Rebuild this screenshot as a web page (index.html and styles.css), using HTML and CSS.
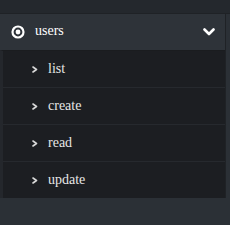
FILE: index.html
```html
<!DOCTYPE html>
<html>
<head>
<meta charset="utf-8">
<link rel="stylesheet" href="styles.css">
</head>
<body>
<div class="page">
  <div class="topbar"></div>
  <div class="menu">
    <div class="header">
      <svg class="radio" width="14" height="14" viewBox="0 0 14 14"><circle cx="7" cy="7" r="5.5" fill="none" stroke="#fff" stroke-width="2.2"/><circle cx="7" cy="7" r="2.4" fill="#fff"/></svg>
      <span class="title">users</span>
      <svg class="chev" width="12" height="8" viewBox="0 0 12 8"><path d="M1.5 1.5 L6 6 L10.5 1.5" fill="none" stroke="#fff" stroke-width="2.6" stroke-linecap="round" stroke-linejoin="round"/></svg>
    </div>
    <ul class="sub">
      <li class="item"><svg class="arrow" width="6" height="7" viewBox="0 0 6 7"><path d="M1 1 L4.5 3.5 L1 6" fill="none" stroke="#d8d8d8" stroke-width="1.6" stroke-linecap="round" stroke-linejoin="round"/></svg><span>list</span></li>
      <li class="item"><svg class="arrow" width="6" height="7" viewBox="0 0 6 7"><path d="M1 1 L4.5 3.5 L1 6" fill="none" stroke="#d8d8d8" stroke-width="1.6" stroke-linecap="round" stroke-linejoin="round"/></svg><span>create</span></li>
      <li class="item"><svg class="arrow" width="6" height="7" viewBox="0 0 6 7"><path d="M1 1 L4.5 3.5 L1 6" fill="none" stroke="#d8d8d8" stroke-width="1.6" stroke-linecap="round" stroke-linejoin="round"/></svg><span>read</span></li>
      <li class="item"><svg class="arrow" width="6" height="7" viewBox="0 0 6 7"><path d="M1 1 L4.5 3.5 L1 6" fill="none" stroke="#d8d8d8" stroke-width="1.6" stroke-linecap="round" stroke-linejoin="round"/></svg><span>update</span></li>
    </ul>
  </div>
</div>
</body>
</html>
```
FILE: styles.css
```css
html, body {
  margin: 0;
  padding: 0;
  background: #2b3036;
  width: 230px;
  height: 225px;
  overflow: hidden;
  font-family: "Liberation Serif", serif;
}
.page {
  width: 230px;
}
.topbar {
  height: 13px;
  background: #24282d;
  border-bottom: 1px solid #1f2226;
}
.menu {
  width: 225px;
  border-right: 1px solid #1f2226;
}
.header {
  height: 36px;
  background: #2e3339;
  display: flex;
  align-items: center;
  padding: 0 10px 0 11px;
  color: #fff;
  font-size: 14px;
}
.radio {
  margin-right: 10px;
}
.title {
  flex: 1;
  padding-bottom: 2px;
}
.sub {
  list-style: none;
  margin: 0;
  padding: 0;
  background: #1c1e22;
  border-left: 3px solid #24272c;
  border-top: 1px solid #1a1c1f;
}
.item {
  height: 36px;
  display: flex;
  align-items: center;
  padding-left: 29px;
  color: #e6e6e6;
  font-size: 14px;
  border-bottom: 1px solid #26292e;
}
.item:last-child {
  border-bottom: none;
}
.arrow {
  margin-right: 10px;
}
```
